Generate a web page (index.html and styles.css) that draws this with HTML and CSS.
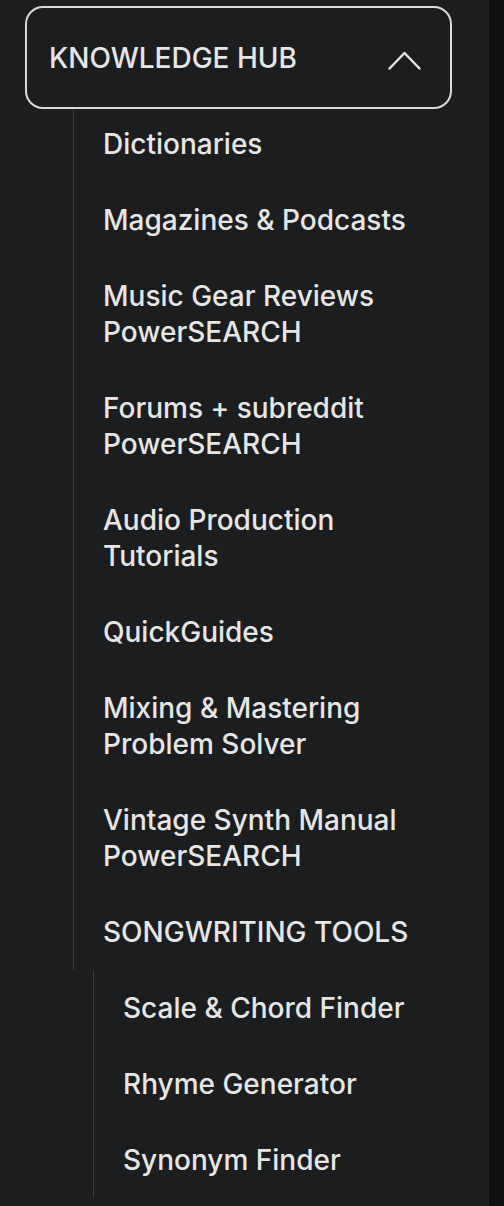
FILE: index.html
```html
<!DOCTYPE html>
<html lang="en">
  <head>
    <meta charset="UTF-8" />
    <meta name="viewport" content="width=device-width, initial-scale=1.0" />
    <title>Knowledge Hub</title>
    <link rel="stylesheet" href="styles.css">
  </head>
  <body>
    <div class="page">
      <nav class="sidebar">
        <!-- Expanded section toggle -->
        <button class="hub-toggle" type="button">
          <span class="hub-title">KNOWLEDGE HUB</span>
          <svg class="hub-chevron" width="33" height="19" viewBox="0 0 33 19" aria-hidden="true">
            <path d="M1.5 17.5 L16.5 2 L31.5 17.5" fill="none" stroke="#e4e4e4" stroke-width="2.5" stroke-linecap="round" stroke-linejoin="round" />
          </svg>
        </button>

        <ul class="menu">
          <li class="menu-item">Dictionaries</li>
          <li class="menu-item">Magazines &amp; Podcasts</li>
          <li class="menu-item">Music Gear Reviews<br>PowerSEARCH</li>
          <li class="menu-item">Forums + subreddit<br>PowerSEARCH</li>
          <li class="menu-item">Audio Production<br>Tutorials</li>
          <li class="menu-item">QuickGuides</li>
          <li class="menu-item">Mixing &amp; Mastering<br>Problem Solver</li>
          <li class="menu-item">Vintage Synth Manual<br>PowerSEARCH</li>
          <li class="menu-item">SONGWRITING TOOLS</li>
        </ul>

        <!-- Songwriting sub menu -->
        <ul class="menu submenu">
          <li class="menu-item">Scale &amp; Chord Finder</li>
          <li class="menu-item">Rhyme Generator</li>
          <li class="menu-item">Synonym Finder</li>
        </ul>
      </nav>
      <div class="scroll-track"></div>
    </div>
  </body>
</html>
```

FILE: styles.css
```css
body {
  margin: 0;
  padding: 0;
  font-family: Inter, 'Noto Sans', 'Liberation Sans', sans-serif;
  -webkit-font-smoothing: antialiased;
  background: #1c1d1f;
  color: #e6e6e6;
  overflow: hidden;
}

.page {
  display: flex;
  min-height: 1206px;
}

.sidebar {
  flex: 1;
  padding-top: 6px;
}

.scroll-track {
  width: 15px;
  background: #0e0f11;
}

/* Section toggle */
.hub-toggle {
  display: flex;
  align-items: center;
  justify-content: space-between;
  box-sizing: border-box;
  width: 427px;
  height: 103px;
  margin-left: 25px;
  padding: 0 29px 0 22px;
  background: transparent;
  border: 2px solid #d9d9d9;
  border-radius: 18px;
  color: #e6e6e6;
  font-family: inherit;
  font-size: 28px;
  font-weight: 500;
  line-height: 36px;
  text-align: left;
}

.hub-chevron {
  display: block;
  margin-top: 6px;
}

/* Menu lists */
.menu {
  list-style: none;
  margin: 0 0 0 73px;
  padding: 0 0 0 29px;
  border-left: 1px solid #3a3b3e;
}

.menu-item {
  padding: 20px 0;
  font-size: 28px;
  font-weight: 500;
  line-height: 36px;
  white-space: nowrap;
}

.menu > .menu-item:first-child {
  padding-top: 17px;
}

.submenu {
  margin-left: 93px;
}

.submenu > .menu-item:first-child {
  padding-top: 20px;
}
```
